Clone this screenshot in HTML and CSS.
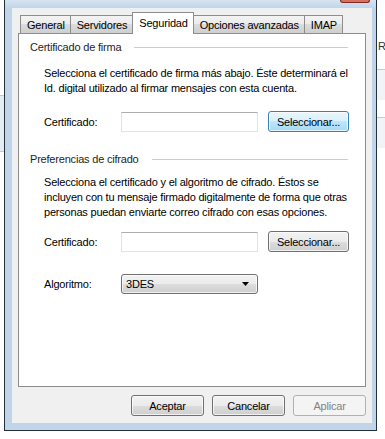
FILE: index.html
```html
<!DOCTYPE html>
<html lang="es">
<head>
  <meta charset="UTF-8">
  <title>Propiedades de la cuenta - Seguridad</title>
  <link rel="stylesheet" href="styles.css">
</head>
<body>
  <div class="desk">
    <div class="peek-left">
      <div class="peek-band"></div>
    </div>

    <div class="window">
      <div class="titlebar">
        <span class="close"></span>
      </div>

      <div class="dialog">
        <div class="tabs">
          <div class="tab">General</div>
          <div class="tab">Servidores</div>
          <div class="tab active">Seguridad</div>
          <div class="tab">Opciones avanzadas</div>
          <div class="tab">IMAP</div>
        </div>

        <div class="panel">
          <div class="group-head">
            <span>Certificado de firma</span>
            <span class="rule"></span>
          </div>
          <p class="desc first">Selecciona el certificado de firma más abajo. Éste determinará el<br>Id. digital utilizado al firmar mensajes con esta cuenta.</p>
          <div class="row row-cert1">
            <label>Certificado:</label>
            <input type="text" class="field">
            <button class="btn focus">Seleccionar...</button>
          </div>

          <div class="group-head second">
            <span>Preferencias de cifrado</span>
            <span class="rule"></span>
          </div>
          <p class="desc">Selecciona el certificado y el algoritmo de cifrado. Éstos se<br>incluyen con tu mensaje firmado digitalmente de forma que otras<br>personas puedan enviarte correo cifrado con esas opciones.</p>
          <div class="row row-cert2">
            <label>Certificado:</label>
            <input type="text" class="field">
            <button class="btn">Seleccionar...</button>
          </div>
          <div class="row row-algo">
            <label>Algoritmo:</label>
            <div class="combo">
              <span>3DES</span>
              <svg width="8" height="4" viewBox="0 0 8 4"><path d="M0 0h7L3.5 4z" fill="#000"/></svg>
            </div>
          </div>
        </div>

        <div class="footer">
          <button class="btn">Aceptar</button>
          <button class="btn">Cancelar</button>
          <button class="btn" disabled>Aplicar</button>
        </div>
      </div>
    </div>

    <div class="peek-right">
      <span class="peek-letter">R</span>
      <div class="peek-line"></div>
      <div class="peek-line"></div>
    </div>
  </div>
</body>
</html>
```

FILE: styles.css
```css
body {
  margin: 0;
  background: #fff;
  font-family: "Liberation Sans", Arial, sans-serif;
  font-size: 11px;
  letter-spacing: -0.2px;
  color: #000;
}
.desk {
  width: 385px;
  height: 439px;
  display: flex;
  overflow: hidden;
}
.peek-left {
  width: 4px;
  padding-top: 95px;
}
.peek-band {
  height: 55px;
  background: #e4ecf4;
  border-top: 1px solid #c9c9c9;
  border-bottom: 1px solid #c9c9c9;
}
.peek-right {
  width: 8px;
  padding-top: 40px;
  display: flex;
  flex-direction: column;
}
.peek-letter {
  padding-left: 1px;
  line-height: 12px;
  color: #333;
}
.peek-line {
  margin-top: 17px;
  height: 30px;
  border-top: 1px solid #c9c9c9;
  background: #f1f4f7;
}

.window {
  width: 373px;
  height: 431px;
  box-sizing: border-box;
  border: 1px solid #24303c;
  border-top: 0;
  background: #c1d5ea;
  padding: 0 4px 7px 7px;
  display: flex;
  flex-direction: column;
}
.titlebar {
  height: 8px;
  margin-left: -7px;
  margin-right: -4px;
  display: flex;
  justify-content: flex-end;
  background: linear-gradient(#d6e3f1, #c1d5ea);
}
.close {
  width: 28px;
  height: 2px;
  margin-right: 6px;
  border: 1px solid #7d2a22;
  border-top: 0;
  border-radius: 0 0 3px 3px;
  background: #d8705f;
}

.dialog {
  flex: 1;
  background: #f0f0f0;
  padding: 4px 6px 0 6px;
  display: flex;
  flex-direction: column;
}
.tabs {
  display: flex;
  align-items: flex-end;
  height: 21px;
  padding-left: 2px;
}
.tab {
  height: 18px;
  box-sizing: border-box;
  padding: 2px 5px 0 6px;
  border: 1px solid #8d8d8d;
  border-bottom: 0;
  border-right: 0;
  background: linear-gradient(#f3f3f3, #ebebeb 50%, #dcdcdc 50%, #cfcfcf);
  white-space: nowrap;
  line-height: 14px;
}
.tab:nth-child(5) {
  border-right: 1px solid #8d8d8d;
}
.tab.active {
  height: 22px;
  margin-bottom: -1px;
  padding-top: 3px;
  border-right: 1px solid #8d8d8d;
  background: #fff;
  position: relative;
  z-index: 1;
}
.tab.active + .tab {
  border-left: 0;
}
.panel {
  height: 354px;
  box-sizing: border-box;
  border: 1px solid #8d8d8d;
  background: #fff;
  padding: 6px 17px 0 11px;
}
.group-head {
  display: flex;
  align-items: center;
  gap: 13px;
  line-height: 15px;
  color: #1e1e1e;
}
.group-head.second {
  margin-top: 20px;
}
.rule {
  flex: 1;
  border-top: 1px solid #c7cdd3;
}
.desc {
  margin: 8px 0 0 14px;
  line-height: 15px;
  white-space: nowrap;
}
.desc.first {
  margin-top: 11px;
}
.row {
  display: grid;
  grid-template-columns: 67px 137px 81px;
  column-gap: 10px;
  align-items: center;
  margin-left: 14px;
  height: 21px;
}
.row-cert1 {
  margin-top: 15px;
}
.row-cert2 {
  margin-top: 11px;
}
.row-algo {
  margin-top: 21px;
}
.field {
  height: 20px;
  box-sizing: border-box;
  margin: 0;
  border: 1px solid #e2e3ea;
  border-top-color: #abadb3;
  background: #fff;
}
.btn {
  height: 21px;
  box-sizing: border-box;
  margin: 0;
  padding: 0 4px;
  border: 1px solid #707070;
  border-radius: 3px;
  background: linear-gradient(#f2f2f2, #ebebeb 50%, #dddddd 50%, #cfcfcf);
  font-family: inherit;
  font-size: inherit;
  letter-spacing: inherit;
  color: #000;
  box-shadow: inset 0 0 0 1px rgba(255, 255, 255, 0.7);
}
.btn.focus {
  border-color: #3c7fb1;
  background: linear-gradient(#eaf6fd, #d9f0fc 50%, #bee6fd 50%, #a7d9f5);
}
.btn:disabled {
  border-color: #adb2b5;
  background: #f4f4f4;
  color: #838383;
  box-shadow: none;
}
.combo {
  grid-column: 2;
  height: 20px;
  box-sizing: border-box;
  border: 1px solid #707070;
  border-radius: 3px;
  padding: 0 7px 0 4px;
  display: flex;
  align-items: center;
  justify-content: space-between;
  background: linear-gradient(#f2f2f2, #ebebeb 50%, #dddddd 50%, #cfcfcf);
  box-shadow: inset 0 0 0 1px rgba(255, 255, 255, 0.7);
}
.footer {
  display: flex;
  justify-content: flex-end;
  gap: 8px;
  margin-top: 8px;
}
.footer .btn {
  width: 73px;
}
```
